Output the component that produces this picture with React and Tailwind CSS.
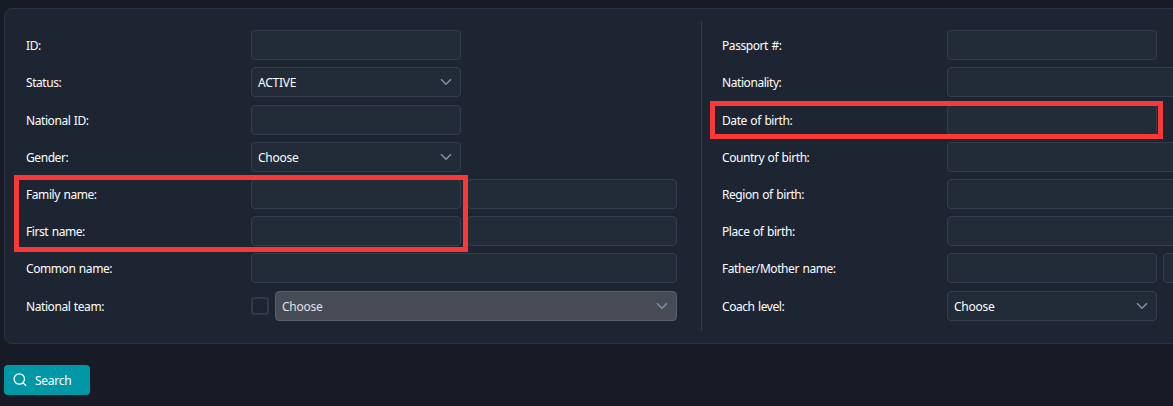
const fieldBase = "h-[30px] shrink-0 rounded-[4px] border border-[#343e4c] bg-[#222b38]";

function Field({ wide = false }) {
  return (
    <input
      type="text"
      className={`${fieldBase} px-1.5 text-white outline-none ${wide ? "w-[426px]" : "w-[210px]"}`}
    />
  );
}

function Chevron() {
  return (
    <svg width="12" height="8" viewBox="0 0 12 8" fill="none" className="shrink-0 text-[#8292a8]">
      <path d="M1 1.2 L6 6.2 L11 1.2" stroke="currentColor" strokeWidth="1.6" />
    </svg>
  );
}

function Select({ value }) {
  return (
    <div className={`${fieldBase} flex w-[210px] items-center justify-between pr-2 pl-1.5 text-white`}>
      <span className="pt-0.5">{value}</span>
      <Chevron />
    </div>
  );
}

function Row({ label, extra = false, children }) {
  return (
    <div className={`flex items-center ${extra ? "pt-px" : ""}`}>
      <div className="w-[225px] shrink-0 pt-0.5 tracking-[-0.43px] whitespace-nowrap text-white [word-spacing:0.8px]">{label}</div>
      <div className="flex shrink-0 items-center gap-1.5">{children}</div>
    </div>
  );
}

export default function App() {
  return (
    <div className="relative h-[406px] w-[1173px] overflow-hidden bg-[#171b25] pt-2 pl-1 font-['Noto_Sans',sans-serif] text-[12px] leading-4 tracking-[-0.25px]">
      <div className="flex h-[336px] w-[1400px] rounded-lg border border-[#2a3443] bg-[#1d2533] py-3 pl-[21px]">
        <div className="flex h-[310px] w-[676px] shrink-0 flex-col gap-[7px] border-r border-[#343e4c] pt-[9px]">
          <Row label="ID:"><Field /></Row>
          <Row label="Status:"><Select value="ACTIVE" /></Row>
          <Row label="National ID:" extra><Field /></Row>
          <Row label="Gender:"><Select value="Choose" /></Row>
          <Row label="Family name:"><Field /><Field /></Row>
          <Row label="First name:"><Field /><Field /></Row>
          <Row label="Common name:"><Field wide /></Row>
          <Row label="National team:" extra>
            <div className="size-[18px] rounded-[4px] border-2 border-[#303947]" />
            <div className="flex h-[30px] w-[402px] items-center justify-between rounded-[4px] border border-[#58626f] bg-[#464b56] pr-2 pl-1.5 text-[#dfe2e6]">
              <span className="pt-0.5">Choose</span>
              <Chevron />
            </div>
          </Row>
        </div>
        <div className="flex flex-col gap-[7px] pt-[9px] pl-5">
          <Row label="Passport #:"><Field /></Row>
          <Row label="Nationality:"><Field wide /></Row>
          <Row label="Date of birth:" extra><Field /></Row>
          <Row label="Country of birth:"><Field wide /></Row>
          <Row label="Region of birth:"><Field wide /></Row>
          <Row label="Place of birth:"><Field wide /></Row>
          <Row label="Father/Mother name:"><Field /><Field /></Row>
          <Row label="Coach level:" extra><Select value="Choose" /></Row>
        </div>
      </div>

      <button className="mt-[21px] flex h-[30px] w-[86px] items-center gap-2 rounded-[4px] bg-[#0097a7] pl-[9px] text-white">
        <svg width="14" height="14" viewBox="0 0 14 14" fill="none" stroke="currentColor" strokeWidth="1.3">
          <circle cx="6.3" cy="6" r="5.2" />
          <path d="M10 9.8 L13 12.8" />
        </svg>
        <span className="pt-0.5">Search</span>
      </button>

      <div className="pointer-events-none absolute top-[175px] left-[14px] h-[77px] w-[454px] border-5 border-[#fb3838]" />
      <div className="pointer-events-none absolute top-[101px] left-[710px] h-[38px] w-[453px] border-5 border-[#fb3838]" />
    </div>
  );
}
